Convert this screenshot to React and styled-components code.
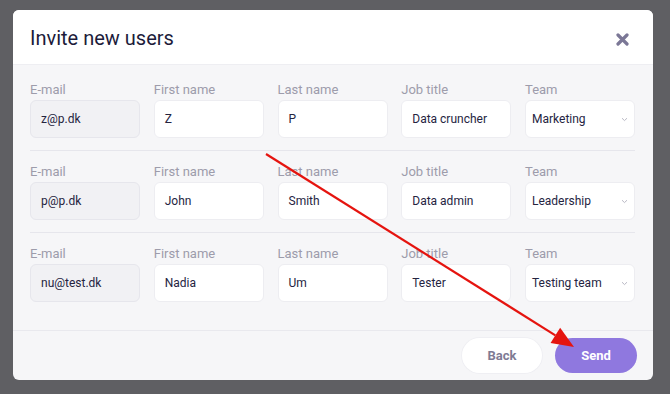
import React from "react";
import styled, { createGlobalStyle } from "styled-components";

const Global = createGlobalStyle`
  html, body { margin: 0; padding: 0; }
  body {
    background: #5f5f63;
    font-family: Roboto, "Noto Sans", "Liberation Sans", sans-serif;
    width: 670px;
    height: 394px;
    overflow: hidden;
  }
`;

const Page = styled.div`
  position: relative;
  width: 670px;
  height: 394px;
  padding: 10px 17px 14px 13px;
  box-sizing: border-box;
`;

const Modal = styled.div`
  width: 640px;
  height: 370px;
  background: #f6f6f8;
  border-radius: 6px;
  overflow: hidden;
  display: flex;
  flex-direction: column;
`;

const Header = styled.div`
  height: 55px;
  background: #ffffff;
  display: flex;
  align-items: center;
  justify-content: space-between;
  padding: 0 24px 0 17px;
  border-bottom: 1px solid #eeeef2;
  box-sizing: border-box;
  flex: none;
`;

const Title = styled.h2`
  margin: 0;
  font-size: 20px;
  font-weight: 400;
  color: #1c1b3a;
  padding-top: 2px;
`;

const Close = styled.button`
  border: 0;
  background: transparent;
  padding: 0;
  width: 13px;
  height: 13px;
  display: flex;
  align-items: center;
  justify-content: center;
  margin-top: 4px;
`;

const Body = styled.div`
  flex: 1;
  padding: 4px 18px 0 17px;
`;

const Row = styled.div`
  display: grid;
  grid-template-columns: repeat(5, 110px);
  column-gap: 13.75px;
  padding: 12px 0;
  border-bottom: ${(p) => (p.$last ? "none" : "1px solid #e6e6ec")};
`;

const Field = styled.div`
  display: flex;
  flex-direction: column;
  gap: 1px;
`;

const Label = styled.label`
  font-size: 13px;
  line-height: 18px;
  color: #9d9cab;
`;

const Box = styled.div`
  height: 38px;
  box-sizing: border-box;
  border: 1px solid ${(p) => (p.$muted ? "#e6e6ec" : "#ededf1")};
  background: ${(p) => (p.$muted ? "#f1f1f4" : "#ffffff")};
  border-radius: 6px;
  display: flex;
  align-items: center;
  justify-content: space-between;
  padding: 0 6px 0 ${(p) => (p.$select ? "6px" : "10px")};
  font-size: 12px;
  color: #25243f;
`;

const Footer = styled.div`
  height: 50px;
  flex: none;
  border-top: 1px solid #e9e9ee;
  display: flex;
  justify-content: flex-end;
  align-items: center;
  gap: 13px;
  padding: 0 16px 0 0;
  box-sizing: border-box;
`;

const Button = styled.button`
  height: 35px;
  border-radius: 18px;
  border: 0;
  font-family: inherit;
  font-size: 13px;
  font-weight: 700;
  width: ${(p) => (p.$primary ? "82px" : "80px")};
  background: ${(p) => (p.$primary ? "#8f78df" : "#ffffff")};
  color: ${(p) => (p.$primary ? "#ffffff" : "#7e7b94")};
  box-shadow: ${(p) => (p.$primary ? "none" : "0 0 0 1px #efeff3")};
`;

const Arrow = styled.svg`
  position: absolute;
  left: 0;
  top: 0;
  pointer-events: none;
`;

const rows = [
  { email: "z@p.dk", first: "Z", last: "P", job: "Data cruncher", team: "Marketing" },
  { email: "p@p.dk", first: "John", last: "Smith", job: "Data admin", team: "Leadership" },
  { email: "nu@test.dk", first: "Nadia", last: "Um", job: "Tester", team: "Testing team" },
];

const Chevron = () => (
  <svg width="7" height="5" viewBox="0 0 7 5">
    <path d="M1 1.2 L3.5 3.6 L6 1.2" fill="none" stroke="#b9b8c4" strokeWidth="1" />
  </svg>
);

export default function App() {
  const x1 = 266, y1 = 154, x2 = 574, y2 = 347;
  const ang = Math.atan2(y2 - y1, x2 - x1);
  const hl = 22, hw = 9;
  const bx = x2 - hl * Math.cos(ang), by = y2 - hl * Math.sin(ang);
  const px = -Math.sin(ang) * hw, py = Math.cos(ang) * hw;
  const head = `${x2},${y2} ${bx + px},${by + py} ${bx - px},${by - py}`;

  return (
    <Page>
      <Global />
      <Modal>
        <Header>
          <Title>Invite new users</Title>
          <Close aria-label="Close">
            <svg width="13" height="13" viewBox="0 0 13 13">
              <path d="M2 2 L11 11 M11 2 L2 11" stroke="#7b7796" strokeWidth="3.2" strokeLinecap="round" />
            </svg>
          </Close>
        </Header>
        <Body>
          {rows.map((r, i) => (
            <Row key={i} $last={i === rows.length - 1}>
              <Field>
                <Label>E-mail</Label>
                <Box $muted>{r.email}</Box>
              </Field>
              <Field>
                <Label>First name</Label>
                <Box>{r.first}</Box>
              </Field>
              <Field>
                <Label>Last name</Label>
                <Box>{r.last}</Box>
              </Field>
              <Field>
                <Label>Job title</Label>
                <Box>{r.job}</Box>
              </Field>
              <Field>
                <Label>Team</Label>
                <Box $select>
                  <span>{r.team}</span>
                  <Chevron />
                </Box>
              </Field>
            </Row>
          ))}
        </Body>
        <Footer>
          <Button>Back</Button>
          <Button $primary>Send</Button>
        </Footer>
      </Modal>
      <Arrow width="670" height="394" viewBox="0 0 670 394">
        <line x1={x1} y1={y1} x2={bx} y2={by} stroke="#e5140f" strokeWidth="2.2" />
        <polygon points={head} fill="#e5140f" />
      </Arrow>
    </Page>
  );
}
